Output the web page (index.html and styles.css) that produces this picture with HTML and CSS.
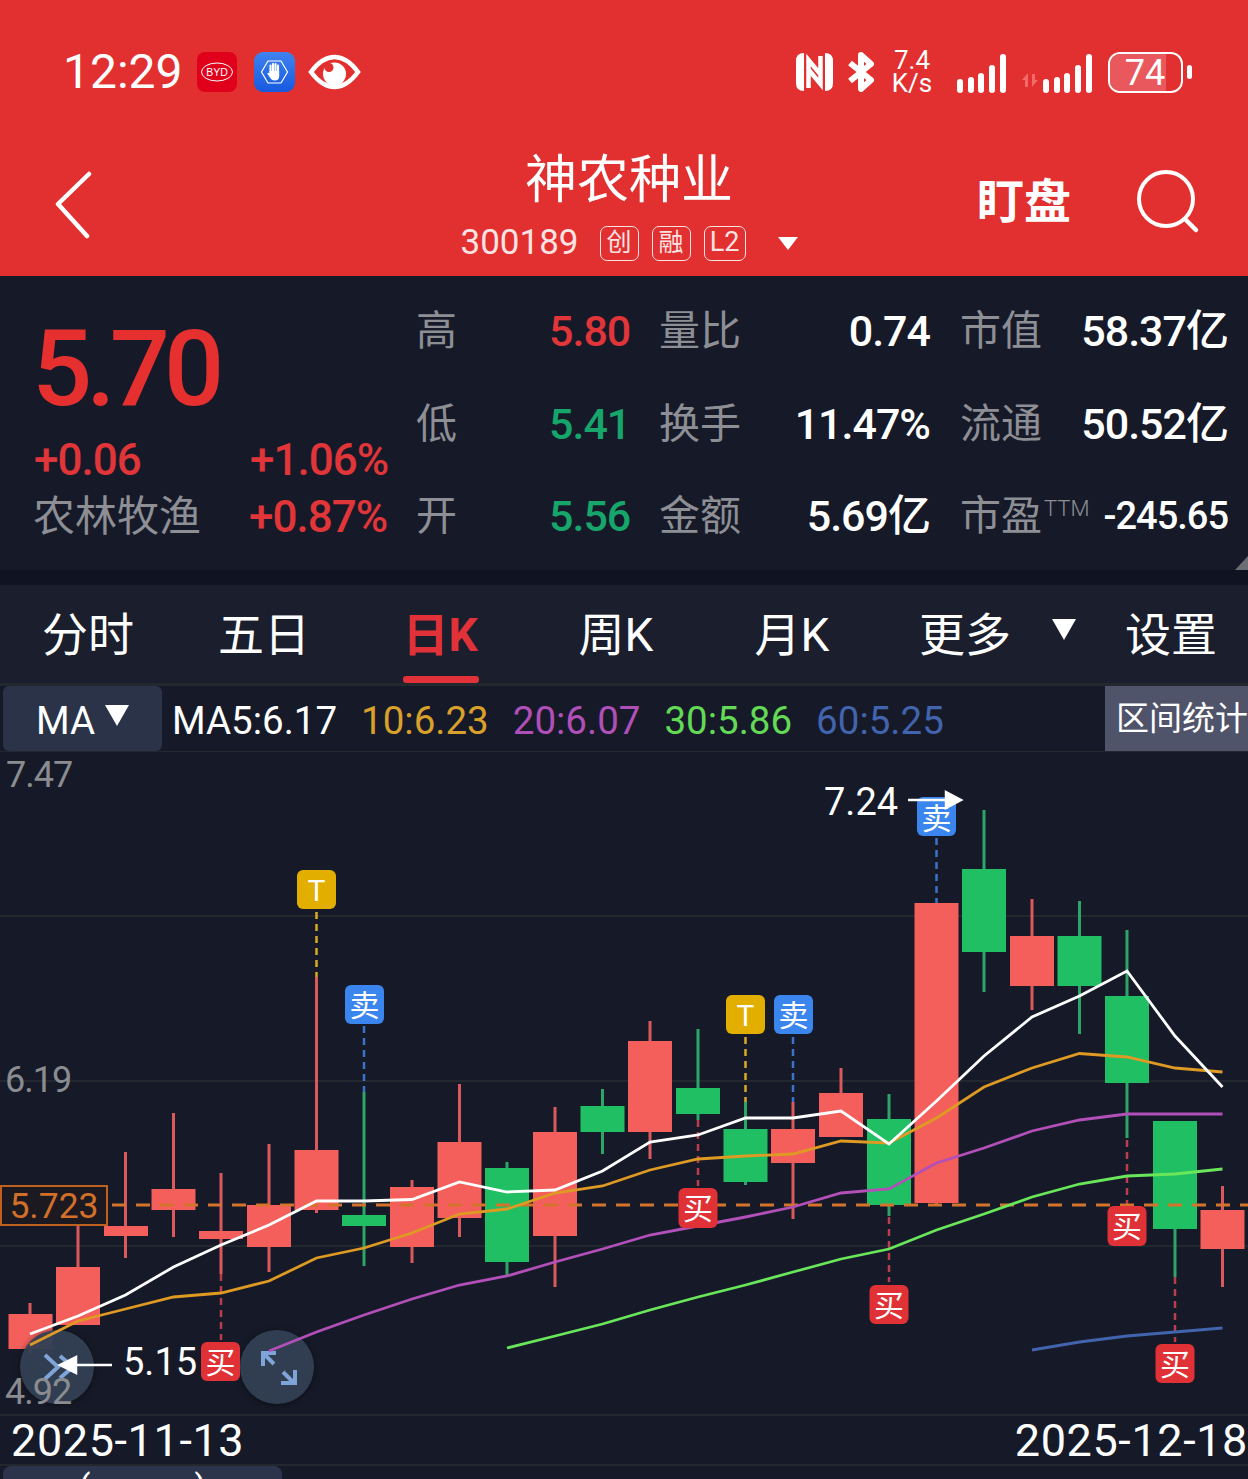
FILE: index.html
```html
<!DOCTYPE html>
<html lang="zh">
<head>
  <meta charset="UTF-8">
  <title>神农种业</title>
  <link rel="stylesheet" href="styles.css">
</head>
<body>
  <header class="top">
    <div class="status">
      <span class="time">12:29</span>
      <svg class="app-icon byd" width="40" height="40" viewBox="0 0 40 40">
        <rect width="40" height="40" rx="8" fill="#e0001b"/>
        <ellipse cx="20" cy="20" rx="15.5" ry="9" fill="none" stroke="#fff" stroke-width="1"/>
        <text x="20" y="23.5" class="byd-text">BYD</text>
      </svg>
      <svg class="app-icon guard" width="41" height="40" viewBox="0 0 41 40">
        <defs>
          <linearGradient id="guardFill" x1="0" y1="0" x2="0" y2="1">
            <stop offset="0" stop-color="#3f83ef"/>
            <stop offset="1" stop-color="#1659e0"/>
          </linearGradient>
        </defs>
        <rect width="41" height="40" rx="9" fill="url(#guardFill)"/>
        <path d="M7.5 20L14 9H27L33.5 20L27 31H14Z" fill="none" stroke="#fff" stroke-width="1.2"/>
        <path d="M16.5 20V13.5M19 20V12M21.5 20V12M24 20V13.5" stroke="#fff" stroke-width="2.1" stroke-linecap="round"/>
        <path d="M15.5 19H25.2V24Q25.2 28.5 20.5 28.5Q17.5 28.5 16 25.5L13.2 21.5Q14.2 20.2 15.5 21.2Z" fill="#fff"/>
      </svg>
      <svg class="eye" width="53" height="36" viewBox="0 0 53 36">
        <path d="M3 18Q14 3 26.500 3Q39 3 50 18Q39 33 26.500 33Q14 33 3 18Z" fill="none" stroke="#fff" stroke-width="4.500"/>
        <circle cx="26.500" cy="20" r="11.500" fill="#fff"/>
        <circle cx="21" cy="13.500" r="4.500" fill="#e22f2f"/>
      </svg>

      <div class="status-right">
        <svg width="37" height="38" viewBox="0 0 37 38">
          <path d="M8 0V38Q0 38 0 30V8Q0 0 8 0Z" fill="#fff"/>
          <path d="M29 0Q37 0 37 8V30Q37 38 29 38Z" fill="#fff"/>
          <path d="M12.500 35V7L25 22M24.500 3V31L12 16" fill="none" stroke="#fff" stroke-width="4.500"/>
        </svg>
        <svg class="bt" width="28" height="40" viewBox="0 0 28 40">
          <path d="M3 11L24 28L14 37V3L24 12L3 29" fill="none" stroke="#fff" stroke-width="6" stroke-linejoin="round"/>
        </svg>
        <div class="speed"><span>7.4</span><span>K/s</span></div>
        <svg class="signal" width="49" height="40" viewBox="0 0 49 40">
          <rect x="0" y="25" width="6" height="14" rx="3"/>
          <rect x="11" y="23" width="6" height="16" rx="3"/>
          <rect x="21" y="19" width="6" height="20" rx="3"/>
          <rect x="32" y="11" width="6" height="28" rx="3"/>
          <rect x="43" y="0" width="6" height="39" rx="3"/>
        </svg>
        <svg class="data-arrows" width="18" height="13" viewBox="0 0 18 13">
          <path d="M5 0L0 6H3V13H6V0ZM10 13L16 6H13V0H10Z" fill="#f26a6a"/>
        </svg>
        <svg class="signal" width="49" height="40" viewBox="0 0 49 40">
          <rect x="0" y="25" width="6" height="14" rx="3"/>
          <rect x="11" y="23" width="6" height="16" rx="3"/>
          <rect x="21" y="19" width="6" height="20" rx="3"/>
          <rect x="32" y="11" width="6" height="28" rx="3"/>
          <rect x="43" y="0" width="6" height="39" rx="3"/>
        </svg>
        <div class="battery">
          <div class="battery-box"><div class="battery-level"></div><span>74</span></div>
          <div class="battery-nub"></div>
        </div>
      </div>
    </div>

    <div class="nav">
      <svg class="back" width="40" height="68" viewBox="0 0 40 68">
        <path d="M35 3L4 33L33 65" fill="none" stroke="#fff" stroke-width="4.500" stroke-linecap="round" stroke-linejoin="round"/>
      </svg>
      <div class="title">
        <div class="name">神农种业</div>
        <div class="code">
          <span class="code-num">300189</span>
          <span class="tag">创</span>
          <span class="tag">融</span>
          <span class="tag tag-l2">L2</span>
          <span class="code-arrow"></span>
        </div>
      </div>
      <div class="actions">
        <span class="watch">盯盘</span>
        <svg width="66" height="66" viewBox="0 0 66 66">
          <circle cx="31" cy="30" r="27" fill="none" stroke="#fff" stroke-width="4"/>
          <path d="M50 50L61 61" stroke="#fff" stroke-width="4.500" stroke-linecap="round"/>
        </svg>
      </div>
    </div>
  </header>

  <section class="info">
    <div class="quote">
      <div class="price">5.70</div>
      <div class="quote-row"><span class="quote-first up">+0.06</span><span class="up">+1.06%</span></div>
      <div class="quote-row"><span class="quote-first sector">农林牧渔</span><span class="up">+0.87%</span></div>
    </div>
    <div class="stats">
      <span class="lab">高</span><span class="val up">5.80</span><span class="lab">量比</span><span class="num">0.74</span><span class="lab lab-far">市值</span><span class="num">58.37亿</span>
      <span class="lab">低</span><span class="val down">5.41</span><span class="lab">换手</span><span class="num">11.47%</span><span class="lab lab-far">流通</span><span class="num">50.52亿</span>
      <span class="lab">开</span><span class="val down">5.56</span><span class="lab">金额</span><span class="num">5.69亿</span><span class="lab lab-far">市盈<sup class="ttm">TTM</sup></span><span class="num num-small">-245.65</span>
    </div>
    <div class="corner"></div>
  </section>
  <div class="strip"></div>

  <nav class="tabs">
    <span class="tab">分时</span>
    <span class="tab">五日</span>
    <span class="tab active">日K</span>
    <span class="tab">周K</span>
    <span class="tab">月K</span>
    <span class="tab tab-more">更多<i class="more-arrow"></i></span>
    <span class="tab tab-set">设置</span>
  </nav>

  <div class="ma-bar">
    <div class="ma-select">MA<i class="ma-arrow"></i></div>
    <span class="ma ma5">MA5:6.17</span>
    <span class="ma ma10">10:6.23</span>
    <span class="ma ma20">20:6.07</span>
    <span class="ma ma30">30:5.86</span>
    <span class="ma ma60">60:5.25</span>
    <div class="range">区间统计</div>
  </div>

  <!-- chart uses page y coordinates through the viewBox -->
  <svg class="chart" width="1248" height="662" viewBox="0 752 1248 662">
    <path class="grid" d="M0 916H1248M0 1081H1248M0 1246H1248"/>

    <!-- signal leaders -->
    <path class="lead lead-t" d="M316.500 912V977M745.500 1037V1102"/>
    <path class="lead lead-s" d="M364 1026V1092M793 1037V1102M936.500 838V903"/>
    <path class="lead lead-b" d="M221 1274V1340M698 1120V1186M889 1217V1282M1127 1140V1205M1175 1277V1342"/>

    <!-- candles: wick then body -->
    <g class="wick-up">
      <path d="M30 1303V1354M78 1225V1267M125.500 1152V1258M173.500 1113V1237M221 1173V1274M269 1144V1272M316.500 977V1213M412 1180V1263M459.500 1084V1237M555 1107V1287M650 1021V1159M793 1102V1219M841 1068V1137M936.500 903V1205M1032 899V1010M1222.500 1186V1287"/>
    </g>
    <g class="wick-down">
      <path d="M364 1092V1266M507 1162V1276M602.500 1089V1154M698 1029V1120M745.500 1102V1185M889 1094V1216M984 810V992M1079.500 901V1034M1127 930V1138M1175 1121V1277"/>
    </g>
    <g class="body-up">
      <rect x="8.500" y="1314" width="44" height="35"/>
      <rect x="56" y="1267" width="44" height="58"/>
      <rect x="104" y="1226" width="44" height="10"/>
      <rect x="151.500" y="1189" width="44" height="21"/>
      <rect x="199" y="1231" width="44" height="8"/>
      <rect x="247" y="1205" width="44" height="42"/>
      <rect x="294.500" y="1150" width="44" height="60"/>
      <rect x="390" y="1187" width="44" height="60"/>
      <rect x="437.500" y="1142" width="44" height="76"/>
      <rect x="533" y="1132" width="44" height="104"/>
      <rect x="628" y="1041" width="44" height="91"/>
      <rect x="771" y="1129" width="44" height="34"/>
      <rect x="819" y="1093" width="44" height="44"/>
      <rect x="914.500" y="903" width="44" height="300"/>
      <rect x="1010" y="936" width="44" height="50"/>
      <rect x="1200.500" y="1210" width="44" height="39"/>
    </g>
    <g class="body-down">
      <rect x="342" y="1215" width="44" height="11"/>
      <rect x="485" y="1168" width="44" height="94"/>
      <rect x="580.500" y="1106" width="44" height="26"/>
      <rect x="676" y="1088" width="44" height="26"/>
      <rect x="723.500" y="1129" width="44" height="53"/>
      <rect x="867" y="1119" width="44" height="86"/>
      <rect x="962" y="869" width="44" height="83"/>
      <rect x="1057.500" y="936" width="44" height="50"/>
      <rect x="1105" y="996" width="44" height="87"/>
      <rect x="1153" y="1121" width="44" height="108"/>
    </g>

    <path class="price-line" d="M112 1205H1248"/>

    <!-- round buttons over the candles -->
    <circle class="fab" cx="57" cy="1367" r="37"/>
    <circle class="fab" cx="277" cy="1367" r="37"/>
    <path class="fab-icon" d="M45 1355L58 1367L45 1379M60 1356L73 1367L60 1378"/>
    <path class="fab-icon" d="M263 1353L274 1364M263 1366V1353H276M283 1372L294 1383M281 1383H295V1370"/>

    <!-- moving averages -->
    <polyline class="line l60" points="1032,1350 1079.500,1342 1127,1336 1175,1332 1222.500,1328"/>
    <polyline class="line l30" points="507,1348 555,1336 602.500,1324 650,1310 698,1297 745.500,1285 793,1272 841,1259 889,1249 936.500,1230 984,1214 1032,1197 1079.500,1184 1127,1176 1175,1174 1222.500,1169"/>
    <polyline class="line l20" points="269,1351 316.500,1332 364,1315 412,1299 459.500,1285 507,1276 555,1262 602.500,1249 650,1235 698,1226 745.500,1217 793,1207 841,1193 889,1189 936.500,1163 984,1148 1032,1131 1079.500,1120 1127,1114 1222.500,1114"/>
    <polyline class="line l10" points="30,1345 78,1321 125.500,1309 173.500,1297 221,1293 269,1281 316.500,1258 364,1248 412,1233 459.500,1214 507,1209 555,1193 602.500,1186 650,1170 698,1159 745.500,1156 793,1154 841,1141 889,1143 936.500,1118 984,1087 1032,1068 1079.500,1053.500 1127,1057 1175,1068 1222.500,1072"/>
    <polyline class="line l5" points="30,1334 78,1316 125.500,1295 173.500,1267 221,1245 269,1225 316.500,1201 364,1201 412,1199.500 459.500,1182 507,1192 555,1190 602.500,1171 650,1142 698,1135 745.500,1118 793,1118 841,1111 889,1144 936.500,1101 984,1056 1032,1017 1079.500,996 1127,971 1175,1036 1222.500,1087"/>

    <!-- y axis -->
    <text class="axis" x="6" y="787">7.47</text>
    <text class="axis" x="5" y="1092">6.19</text>
    <text class="axis" x="5" y="1404">4.92</text>

    <!-- cost line tag -->
    <rect class="cost-box" x="1" y="1186" width="106" height="39"/>
    <text class="cost-text" x="54" y="1218">5.723</text>

    <!-- high and low marks -->
    <text class="mark" x="824" y="815">7.24</text>
    <text class="mark" x="123" y="1375">5.15</text>

    <!-- buy, sell and T tags -->
    <rect class="tag-s" x="917" y="797" width="39" height="39" rx="6"/>
    <text class="sig" x="936.500" y="829">卖</text>
    <path class="mark-arrow" d="M908 800H948M946 792L961 800L946 808Z"/>
    <path class="mark-arrow" d="M112 1365H72M76 1357L60 1365L76 1373Z"/>

    <rect class="tag-t" x="297" y="870" width="39" height="39" rx="6"/>
    <text class="sig" x="316.500" y="901">T</text>
    <rect class="tag-s" x="345" y="985" width="39" height="39" rx="6"/>
    <text class="sig" x="364.500" y="1016">卖</text>
    <rect class="tag-t" x="726" y="995" width="39" height="39" rx="6"/>
    <text class="sig" x="745.500" y="1026">T</text>
    <rect class="tag-s" x="774" y="995" width="39" height="39" rx="6"/>
    <text class="sig" x="793.500" y="1026">卖</text>
    <rect class="tag-b" x="201" y="1342" width="39" height="39" rx="6"/>
    <text class="sig" x="220.500" y="1373">买</text>
    <rect class="tag-b" x="678.500" y="1188" width="39" height="40" rx="6"/>
    <text class="sig" x="698" y="1219">买</text>
    <rect class="tag-b" x="869.500" y="1285" width="39" height="39" rx="6"/>
    <text class="sig" x="889" y="1316">买</text>
    <rect class="tag-b" x="1107.500" y="1206" width="39" height="40" rx="6"/>
    <text class="sig" x="1127" y="1237">买</text>
    <rect class="tag-b" x="1155.500" y="1344" width="39" height="39" rx="6"/>
    <text class="sig" x="1175" y="1375">买</text>
  </svg>

  <div class="dates">
    <span>2025-11-13</span>
    <span>2025-12-18</span>
  </div>

  <div class="bottom">
    <div class="sub-tab">(&emsp;&emsp;&emsp;)</div>
  </div>
</body>
</html>
```

FILE: styles.css
```css
* {
  box-sizing: border-box;
}
html, body {
  margin: 0;
  height: 1479px;
  overflow: hidden;
}
body {
  width: 1248px;
  background-color: #161a28;
  color: #fff;
  font-family: Roboto, "Noto Sans CJK SC", sans-serif;
}
.up {
  color: #e03539;
}
.down {
  color: #16a56b;
}

/* red header */
.top {
  height: 276px;
  background-color: #e22f2f;
}
.status {
  height: 144px;
  display: flex;
  align-items: center;
  padding-left: 63px;
}
.time {
  font-size: 48px;
  line-height: 48px;
  width: 134px;
}
.app-icon {
  margin-right: 17px;
  flex: none;
}
.byd-text {
  font-size: 10.5px;
  font-family: "Liberation Sans", sans-serif;
  fill: #fff;
  text-anchor: middle;
}
.eye {
  margin-left: -4px;
}
.status-right {
  margin-left: auto;
  display: flex;
  align-items: center;
  padding-right: 56px;
}
.bt {
  margin-left: 14px;
}
.speed {
  margin-left: 17px;
  width: 40px;
  display: flex;
  flex-direction: column;
  align-items: center;
  font-size: 26px;
  line-height: 23px;
}
.signal {
  fill: #fff;
  margin-left: 25px;
  margin-top: 3px;
}
.data-arrows {
  margin-left: 16px;
  margin-top: 16px;
}
.data-arrows + .signal {
  margin-left: 3px;
}
.battery {
  margin-left: 16px;
  display: flex;
  align-items: center;
}
.battery-box {
  position: relative;
  width: 75px;
  height: 41px;
  border: 2.5px solid #fff;
  border-radius: 12px;
  overflow: hidden;
  font-size: 36px;
  line-height: 39px;
  text-align: center;
  padding-right: 1px;
}
.battery-level {
  position: absolute;
  left: 0;
  top: 0;
  bottom: 0;
  width: 56px;
  background-color: #e8585c;
}
.battery-box span {
  position: relative;
}
.battery-nub {
  width: 5px;
  height: 14px;
  margin-left: 4px;
  border-radius: 3px;
  background-color: #fff;
}

.nav {
  height: 132px;
  display: grid;
  grid-template-columns: 288px 682px 278px;
}
.back {
  margin: 27px 0 0 54px;
}
.title {
  text-align: center;
}
.name {
  font-size: 52px;
  line-height: 62px;
  margin-top: 6px;
}
.code {
  display: flex;
  align-items: center;
  justify-content: center;
  margin-top: 13px;
  color: #fbe3e3;
}
.code-num {
  font-size: 35px;
  line-height: 36px;
  margin-right: 21px;
}
.tag {
  width: 39px;
  height: 35px;
  border: 1.5px solid #fbe3e3;
  border-radius: 7px;
  font-size: 25px;
  line-height: 31px;
  margin-right: 13px;
  text-align: center;
}
.tag-l2 {
  width: 42px;
  font-size: 27px;
}
.code-arrow {
  width: 0;
  height: 0;
  margin-left: 19px;
  border-left: 10px solid transparent;
  border-right: 10px solid transparent;
  border-top: 13px solid #fff;
}
.actions {
  display: flex;
  align-items: flex-start;
  padding-left: 7px;
}
.watch {
  font-size: 47px;
  font-weight: 700;
  line-height: 54px;
  width: 158px;
  margin-top: 31px;
}
.actions svg {
  margin-top: 25px;
}

/* quote panel */
.info {
  position: relative;
  height: 294px;
  display: flex;
  background-color: #161a28;
}
.quote {
  width: 416px;
  padding: 43px 0 0 34px;
}
.price {
  font-size: 106px;
  font-weight: 500;
  line-height: 100px;
  letter-spacing: -6px;
  color: #e5302f;
  margin-left: -2px;
  margin-bottom: 13px;
}
.quote-row {
  display: flex;
  height: 57px;
  line-height: 56px;
  font-size: 44px;
  font-weight: 500;
  letter-spacing: -1px;
}
.quote-first {
  width: 216px;
}
.sector {
  font-size: 42px;
  font-weight: 400;
  color: #8d8f95;
  letter-spacing: 0;
  margin-left: -1px;
}
.stats {
  display: grid;
  grid-template-columns: 133px 110px 131px 140px 150px 148px;
  grid-auto-rows: 92.5px;
  margin-top: 9px;
  align-items: center;
  font-size: 42px;
}
.lab {
  font-size: 41px;
  line-height: 50px;
  color: #8d8f95;
  white-space: nowrap;
}
.lab-far {
  margin-left: 30px;
}
.val {
  font-size: 43px;
  font-weight: 500;
  line-height: 50px;
  letter-spacing: -1px;
}
.num {
  font-size: 43px;
  font-weight: 500;
  line-height: 50px;
  letter-spacing: -1px;
  text-align: right;
  white-space: nowrap;
}
.num-small {
  font-size: 38px;
}
.ttm {
  font-size: 22px;
  font-weight: 300;
  vertical-align: 14px;
  line-height: 0;
  margin-left: 2px;
}
.corner {
  position: absolute;
  right: 0;
  bottom: 0;
  width: 0;
  height: 0;
  border-left: 13px solid transparent;
  border-bottom: 14px solid #6c6e74;
}
.strip {
  height: 15px;
  background-color: #0f1322;
}

/* period tabs */
.tabs {
  display: grid;
  grid-template-columns: repeat(5, 176px) 216px 152px;
  height: 101px;
  background-color: #1a1e2d;
  border-bottom: 3px solid #23272e;
}
.tab {
  position: relative;
  display: flex;
  align-items: center;
  justify-content: center;
  font-size: 46px;
  padding-bottom: 6px;
}
.tab.active {
  color: #e03238;
  font-weight: 700;
}
.tab.active::after {
  content: "";
  position: absolute;
  left: 51px;
  bottom: 0;
  width: 76px;
  height: 7px;
  border-radius: 3px;
  background-color: #e03238;
}
.tab-more {
  justify-content: flex-start;
  padding-left: 39px;
}
.more-arrow {
  width: 0;
  height: 0;
  margin: 0 0 3px 41px;
  border-left: 12.500px solid transparent;
  border-right: 12.500px solid transparent;
  border-top: 21px solid #fff;
}
.tab-set {
  justify-content: flex-start;
  padding-left: 29px;
}

/* moving average bar */
.ma-bar {
  display: flex;
  align-items: center;
  height: 66px;
  padding-left: 3px;
  border-bottom: 1px solid #23272e;
  font-size: 38.500px;
}
.ma-select {
  display: flex;
  align-items: center;
  width: 159px;
  height: 65px;
  padding: 3px 0 0 33px;
  border-radius: 6px;
  background-color: #2a3348;
}
.ma-arrow {
  width: 0;
  height: 0;
  margin: 0 0 9px 10px;
  border-left: 12.500px solid transparent;
  border-right: 12.500px solid transparent;
  border-top: 21px solid #fff;
}
.ma {
  margin: 3px 0 0 24px;
}
.ma5 {
  margin-left: 10px;
}
.ma10 {
  color: #d9a02b;
}
.ma20 {
  color: #b14fb8;
}
.ma30 {
  color: #63d955;
}
.ma60 {
  color: #4263ad;
}
.range {
  margin-left: auto;
  width: 143px;
  height: 65px;
  padding-left: 11px;
  background-color: #50546a;
  font-size: 33px;
  line-height: 65px;
  white-space: nowrap;
  overflow: hidden;
}

/* kline chart */
.chart {
  display: block;
}
.grid {
  stroke: #23272e;
  stroke-width: 2;
  fill: none;
}
.lead {
  fill: none;
  stroke-width: 2.500;
  stroke-dasharray: 7 5;
}
.lead-t {
  stroke: #d9ab25;
}
.lead-s {
  stroke: #3b73c9;
}
.lead-b {
  stroke: #b93d4a;
}
.wick-up path {
  stroke: #d9595c;
  stroke-width: 3;
  fill: none;
}
.wick-down path {
  stroke: #2ca566;
  stroke-width: 3;
  fill: none;
}
.body-up {
  fill: #f45f5b;
}
.body-down {
  fill: #20bf63;
}
.price-line {
  stroke: #d4742c;
  stroke-width: 3;
  stroke-dasharray: 14 10;
  fill: none;
}
.fab {
  fill: rgba(52, 66, 87, 0.92);
  filter: drop-shadow(0 1px 3px rgba(0, 0, 0, 0.5));
}
.fab-icon {
  fill: none;
  stroke: #7ea4d8;
  stroke-width: 4;
}
.line {
  fill: none;
  stroke-width: 2.800;
}
.l5 {
  stroke: #fff;
}
.l10 {
  stroke: #de9a23;
}
.l20 {
  stroke: #b24fb8;
}
.l30 {
  stroke: #69e65a;
}
.l60 {
  stroke: #4263ad;
}
.axis {
  fill: #8a8c90;
  font-size: 36px;
  letter-spacing: -1px;
}
.cost-box {
  fill: #1c1a20;
  stroke: #c0601e;
  stroke-width: 2;
}
.cost-text {
  fill: #d2702a;
  font-size: 35.500px;
  text-anchor: middle;
}
.mark {
  fill: #fff;
  font-size: 38px;
}
.mark-arrow {
  fill: #fff;
  stroke: #fff;
  stroke-width: 2.500;
}
.tag-t {
  fill: #e2ae00;
}
.tag-s {
  fill: #3a86ee;
}
.tag-b {
  fill: #e03236;
}
.sig {
  fill: #fff;
  font-size: 30px;
  text-anchor: middle;
}

.dates {
  display: flex;
  justify-content: space-between;
  height: 52px;
  padding-left: 11px;
  border-top: 2px solid #23272e;
  border-bottom: 2px solid #23272e;
  font-size: 45px;
  letter-spacing: 0.600px;
  line-height: 50px;
  white-space: nowrap;
}
.bottom {
  padding-left: 3px;
}
.sub-tab {
  width: 279px;
  height: 30px;
  border-radius: 8px 8px 0 0;
  background-color: #2b344a;
  font-size: 34px;
  line-height: 40px;
  text-align: center;
}
```
